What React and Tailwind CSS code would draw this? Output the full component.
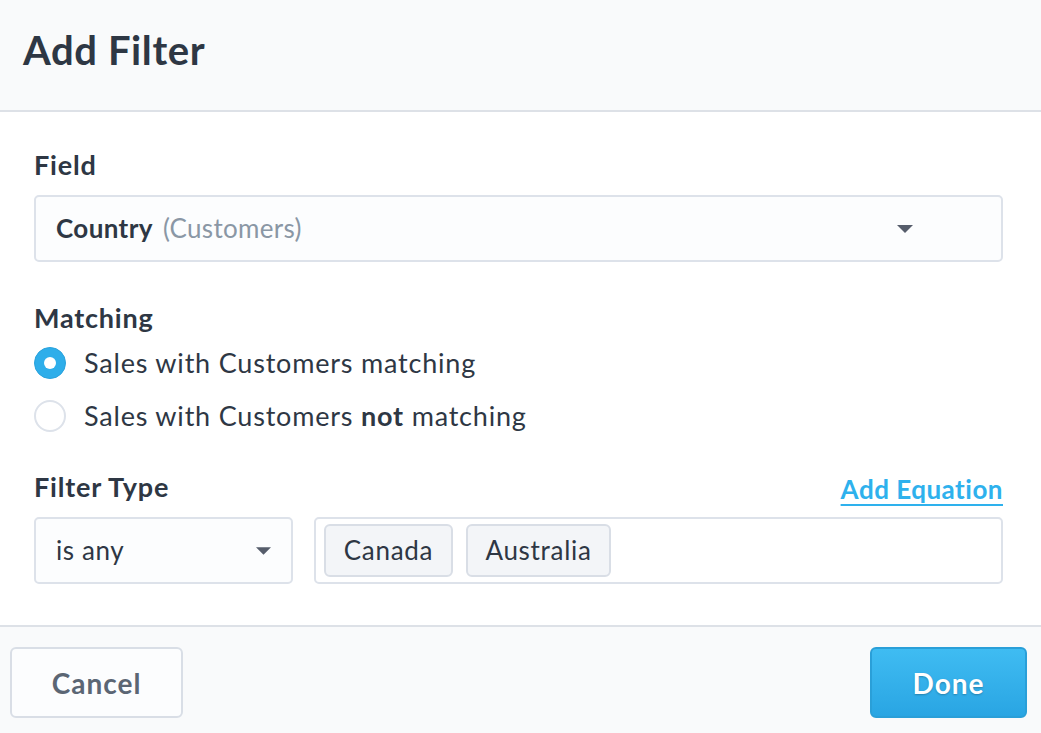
import React from "react";

function Caret({ className }) {
  return (
    <svg className={className} viewBox="0 0 16 8" width="16" height="8">
      <path d="M0 0 H16 L8 8 Z" fill="#565d6b" />
    </svg>
  );
}

export default function App() {
  return (
    <div
      className="w-[1041px] h-[733px] flex flex-col bg-white text-[#2e3744] overflow-hidden"
      style={{ fontFamily: "Lato, 'Noto Sans', sans-serif" }}
    >
      <header className="h-[112px] shrink-0 bg-[#f9fafb] border-b-2 border-[#dde1e7] pl-[23px] flex items-center">
        <h1 className="text-[40px] font-bold leading-none mt-[-10px] tracking-[0.6px]">Add Filter</h1>
      </header>

      <main className="flex-1 pl-[34px] pr-[38px] pt-[37px] flex flex-col">
        <div className="h-[32px] flex items-center text-[27px] font-bold tracking-[0.8px]">Field</div>
        <div className="mt-[14px] h-[67px] rounded-[5px] border-2 border-[#dde2ea] bg-[#fcfdfe] flex items-center pl-[20px] pr-[88px]">
          <span className="text-[26px] font-bold tracking-[0.4px]">Country</span>
          <span className="ml-[10px] text-[26px] text-[#8a97a5] tracking-[0.3px]">(Customers)</span>
          <Caret className="ml-auto" />
        </div>

        <div className="mt-[40px] h-[32px] flex items-center text-[27px] font-bold tracking-[0.8px]">Matching</div>
        <label className="mt-[13px] h-[32px] flex items-center">
          <span className="w-[32px] h-[32px] rounded-full bg-[#2eaeea] border border-[#2aa2dc] flex items-center justify-center">
            <span className="w-[12px] h-[12px] rounded-full bg-white" />
          </span>
          <span className="ml-[18px] text-[27px] tracking-[0.8px]">Sales with Customers matching</span>
        </label>
        <label className="mt-[21px] h-[32px] flex items-center">
          <span className="w-[32px] h-[32px] rounded-full bg-white border-2 border-[#dde2ea]" />
          <span className="ml-[18px] text-[27px] tracking-[0.8px]">
            Sales with Customers <b className="font-bold">not</b> matching
          </span>
        </label>

        <div className="mt-[39px] h-[32px] flex items-center justify-between">
          <span className="text-[27px] font-bold tracking-[0.8px]">Filter Type</span>
          <a className="text-[26px] font-bold text-[#2eb1ed] tracking-[0.5px] underline decoration-2 underline-offset-[5px] mt-[4px]">
            Add Equation
          </a>
        </div>

        <div className="mt-[14px] flex gap-[21px]">
          <div className="w-[259px] h-[67px] rounded-[5px] border-2 border-[#dde2ea] bg-[#fcfdfe] flex items-center pl-[20px] pr-[20px]">
            <span className="text-[26px] tracking-[0.6px]">is any</span>
            <Caret className="ml-auto w-[15px]" />
          </div>
          <div className="flex-1 h-[67px] rounded-[5px] border-2 border-[#dde2ea] bg-white flex items-center pl-[8px] gap-[13px]">
            <span className="h-[53px] w-[129px] rounded-[6px] border-2 border-[#d9dee6] bg-[#f3f5f8] flex items-center justify-center text-[26px] tracking-[0.7px]">
              Canada
            </span>
            <span className="h-[53px] w-[145px] rounded-[6px] border-2 border-[#d9dee6] bg-[#f3f5f8] flex items-center justify-center text-[26px] tracking-[0.7px]">
              Australia
            </span>
          </div>
        </div>
      </main>

      <footer className="h-[108px] shrink-0 bg-[#f9fafb] border-t-2 border-[#dde1e7] flex items-start justify-between pl-[10px] pr-[14px] pt-[20px]">
        <button className="w-[173px] h-[71px] rounded-[6px] border-2 border-[#d9dee6] bg-[#fcfdfe] text-[28px] font-bold text-[#5b6674] tracking-[1px]">
          Cancel
        </button>
        <button className="w-[157px] h-[71px] rounded-[6px] border-2 border-[#2a9fd8] bg-gradient-to-b from-[#3fbcf2] to-[#29a5e3] text-[28px] font-bold text-white tracking-[1px] [text-shadow:0_1px_2px_rgba(0,0,0,0.25)]">
          Done
        </button>
      </footer>
    </div>
  );
}
